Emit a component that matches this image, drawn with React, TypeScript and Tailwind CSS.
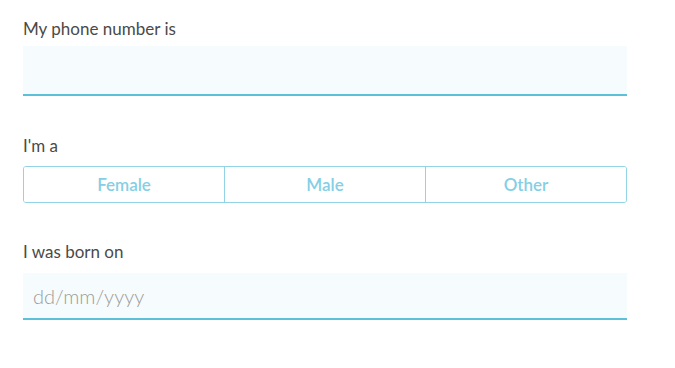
import { useState } from 'react';

const genders = ['Female', 'Male', 'Other'];

export default function App() {
  const [gender, setGender] = useState<string | null>(null);

  return (
    <div className="min-h-[368px] w-[675px] bg-white font-['Lato','Open_Sans',sans-serif] text-[#4a4a4a]">
      <form className="flex w-[604px] flex-col pl-[23px] pt-[17px] box-content">
        <label className="text-[17px] leading-6">My phone number is</label>
        <input
          type="tel"
          className="mt-[5px] h-[50px] w-full border-b-2 border-[#5bc0d8] bg-[#f6fbfd] px-[10px] text-xl outline-none"
        />

        <label className="mt-[38px] text-[17px] leading-6">I'm a</label>
        <div className="mt-[8px] flex h-[37px] w-full overflow-hidden rounded-[3px] border border-[#92d4e6]">
          {genders.map((g, i) => (
            <button
              key={g}
              type="button"
              onClick={() => setGender(g)}
              className={
                'flex-1 text-[17px] font-semibold text-[#84cfe5] ' +
                (i > 0 ? 'border-l border-[#92d4e6] ' : '') +
                (gender === g ? 'bg-[#eef9fc]' : 'bg-white')
              }
            >
              {g}
            </button>
          ))}
        </div>

        <label className="mt-[37px] text-[17px] leading-6">I was born on</label>
        <input
          type="text"
          placeholder="dd/mm/yyyy"
          className="mt-[9px] h-[47px] w-full border-b-2 border-[#5bc0d8] bg-[#f6fbfd] px-[10px] text-xl font-light text-[#4a4a4a] outline-none placeholder:text-[#9b9b9b]"
        />
      </form>
    </div>
  );
}
